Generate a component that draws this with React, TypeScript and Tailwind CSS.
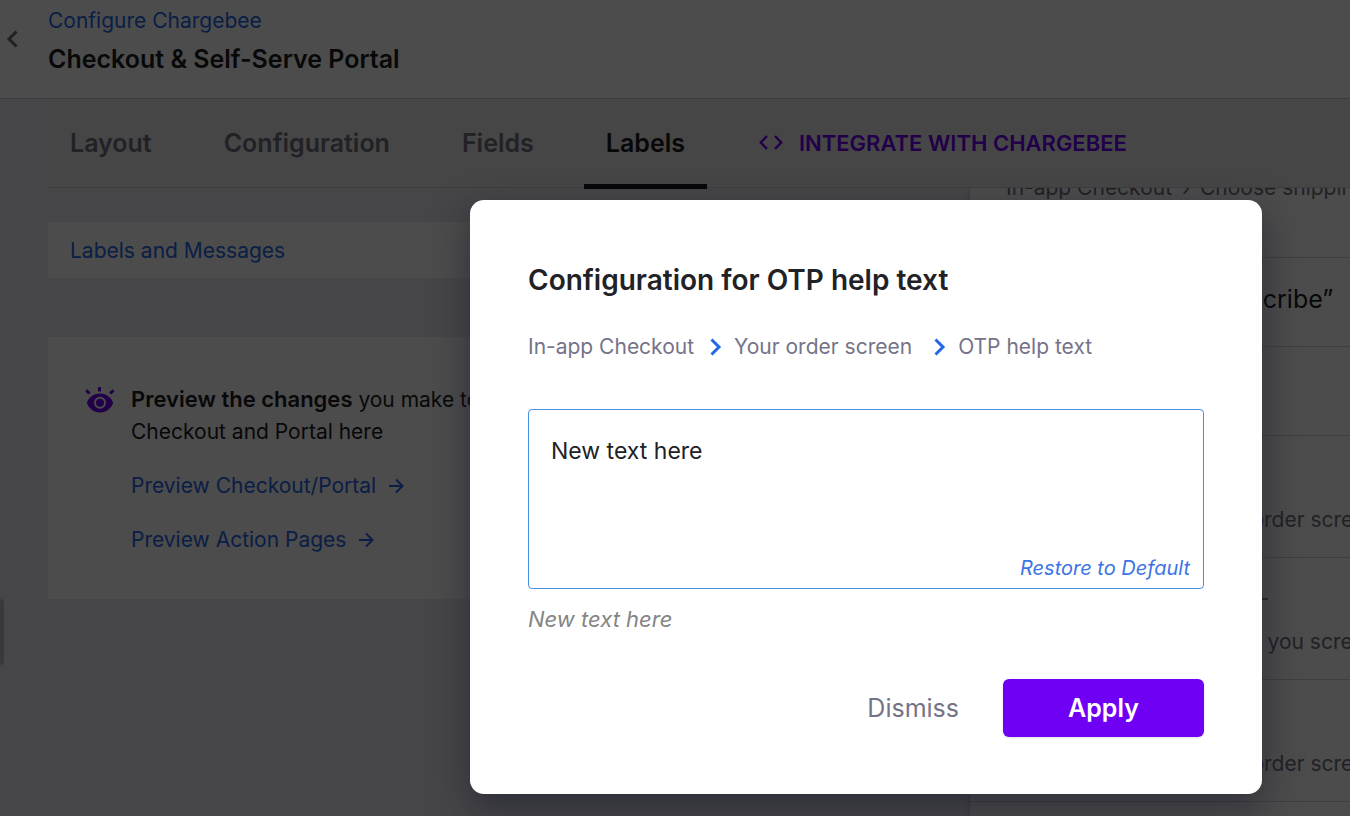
import { ReactNode } from "react";

const tabs = ["Layout", "Configuration", "Fields", "Labels"];

type Row = { title: string; screen?: string; blank?: boolean };

const rows: Row[] = [
  { title: "Button label for “Subscribe”" },
  { title: "Coupon label" },
  { title: "OTP help text", screen: "Your order screen" },
  { title: "Thank you message", screen: "Thank you screen", blank: true },
  { title: "Order summary", screen: "Your order screen" },
];

function Chevron({ left = false, className = "" }: { left?: boolean; className?: string }) {
  return (
    <svg viewBox="0 0 12 18" className={className} fill="none" stroke="currentColor" strokeWidth="3" aria-hidden="true">
      <path d={left ? "M10.5 1.5 3 9l7.5 7.5" : "M1.5 1.5 9 9l-7.5 7.5"} />
    </svg>
  );
}

function CodeIcon() {
  return (
    <svg viewBox="0 0 24 16" className="h-4 w-6" fill="none" stroke="currentColor" strokeWidth="2.4" aria-hidden="true">
      <path d="M8 1 1.800 7.500 8 14M16 1l6.200 6.500L16 14" />
    </svg>
  );
}

function EyeIcon() {
  return (
    <svg viewBox="0 0 30 26" className="h-[26px] w-[30px] shrink-0" aria-hidden="true">
      <path
        fill="currentColor"
        fillRule="evenodd"
        d="M15 6.500C8.500 6.500 3.800 10.500 1.800 15.800c2 5.700 7 9.700 13.200 9.700s11.200-4 13.200-9.700C26.200 10.500 21.500 6.500 15 6.500Zm0 3.300a6 6 0 1 1 0 12 6 6 0 0 1 0-12Z"
      />
      <circle cx="15" cy="15.800" r="4" fill="currentColor" />
      <path d="M14.500 0v4.500M1.200 3.200l3.300 3.300M28.500 3.200 25.200 6.500" stroke="currentColor" strokeWidth="3" />
    </svg>
  );
}

function ArrowIcon() {
  return (
    <svg viewBox="0 0 16 16" className="h-4 w-4" fill="none" stroke="currentColor" strokeWidth="2" aria-hidden="true">
      <path d="M1 8h13M8 1.500 14.500 8 8 14.500" />
    </svg>
  );
}

function ArrowLink({ children }: { children: ReactNode }) {
  return (
    <a href="#preview" className="flex items-center gap-3 text-[#2566e8]">
      {children}
      <ArrowIcon />
    </a>
  );
}

function Location({ screen }: { screen: string }) {
  return (
    <span className="text-[#6f6f80]">
      In-app Checkout <span className="mx-1">›</span> {screen}
    </span>
  );
}

function LabelRow({ title, screen, blank }: Row) {
  return (
    <li className={`flex shrink-0 flex-col justify-center gap-3.5 border-b border-[#d4d4dc] px-9 whitespace-nowrap ${screen ? "h-[122px]" : "h-[89px] pb-1.5"}`}>
      <span className="text-[25px] text-[#1c1c1e]">
        {title}
        {blank && <span className="ml-2 inline-block h-0.5 w-4 bg-[#90909a] align-[5px]" />}
      </span>
      {screen && <Location screen={screen} />}
    </li>
  );
}

export default function App() {
  return (
    <div className="relative flex h-screen flex-col overflow-hidden bg-[#e9e9f0] font-['Inter',sans-serif] text-[21px] leading-8 text-[#1c1c1e]">
      <header className="flex h-[99px] shrink-0 border-b border-[#c8c8d0] bg-white">
        <a href="#back" aria-label="Back" className="flex w-12 shrink-0 pt-[30px] pl-1.5 text-[#6b6b76]">
          <Chevron left className="h-[18px] w-3" />
        </a>
        <div className="flex flex-col gap-1.5 pt-[5px]">
          <a href="#configure" className="text-[#2566e8]">Configure Chargebee</a>
          <h1 className="text-[25px] font-semibold">Checkout &amp; Self-Serve Portal</h1>
        </div>
      </header>

      <div className="flex min-h-0 flex-1">
        <div className="w-12 shrink-0 pt-[500px]">
          <div className="h-[66px] w-1 rounded-r bg-[#c0c0c2]" />
        </div>
        <div className="flex min-w-0 flex-1 flex-col">
          <nav className="flex h-[89px] shrink-0 items-center gap-7 border-b border-[#cfcfd6] bg-[#ebebeb]">
            {tabs.map((tab) => (
              <a
                key={tab}
                href={`#${tab.toLowerCase()}`}
                className={`relative flex h-full items-center px-[22px] text-[25px] font-semibold ${
                  tab === "Labels"
                    ? "text-[#1c1c1e] after:absolute after:inset-x-0 after:-bottom-0.5 after:h-[5px] after:bg-[#1c1c1e]"
                    : "text-[#6f6f80]"
                }`}
              >
                {tab}
              </a>
            ))}
            <a href="#integrate" className="flex items-center gap-4 pl-6 text-[22px] font-semibold whitespace-nowrap text-[#7000f4]">
              <CodeIcon />
              INTEGRATE WITH CHARGEBEE
            </a>
          </nav>

          <main className="flex min-h-0 flex-1">
            <div className="mr-[57px] flex w-[864px] shrink-0 flex-col pt-[34px]">
              <a href="#messages" className="bg-white px-[22px] pt-[13px] pb-[11px] text-[#2566e8]">Labels and Messages</a>
              <section className="mt-[59px] flex gap-4 bg-white px-[37px] pt-[46px] pb-[43px]">
                <div className="pt-1 text-[#7000f4]">
                  <EyeIcon />
                </div>
                <div className="flex flex-col gap-[22px]">
                  <p>
                    <strong className="text-[22px] font-semibold">Preview the changes</strong> you make to
                    <br />
                    Checkout and Portal here
                  </p>
                  <ArrowLink>Preview Checkout/Portal</ArrowLink>
                  <ArrowLink>Preview Action Pages</ArrowLink>
                </div>
              </section>
            </div>
            <ul className="flex min-w-0 flex-1 flex-col overflow-hidden border-l border-[#d4d4dc] bg-white shadow-md">
              <li className="flex h-[70px] shrink-0 border-b border-[#d4d4dc] px-9 whitespace-nowrap">
                <div className="-mt-4">
                  <Location screen="Choose shipping" />
                </div>
              </li>
              {rows.map((row) => (
                <LabelRow key={row.title} {...row} />
              ))}
            </ul>
          </main>
        </div>
      </div>

      <div className="absolute inset-0 flex items-start justify-end bg-black/70 pt-[200px] pr-[88px]">
        <div
          role="dialog"
          aria-labelledby="dialog-title"
          className="flex w-[792px] flex-col rounded-[14px] bg-white px-[58px] pt-16 pb-[57px] shadow-[0_14px_36px_rgba(20,20,40,0.5)]"
        >
          <h2 id="dialog-title" className="text-[28px] font-semibold text-[#222226]">Configuration for OTP help text</h2>
          <nav aria-label="Label location" className="flex items-center gap-3 pt-[35px] text-[#757388]">
            <span>In-app Checkout</span>
            <Chevron className="ml-1 h-[18px] w-3 text-[#2566e8]" />
            <span>Your order screen</span>
            <Chevron className="ml-2.5 h-[18px] w-3 text-[#2566e8]" />
            <span>OTP help text</span>
          </nav>
          <div className="relative mt-[46px] flex">
            <textarea
              aria-labelledby="dialog-title"
              defaultValue="New text here"
              className="h-[180px] w-full resize-none rounded border border-[#4a90e2] px-[22px] py-[25px] text-[23px] leading-8 text-[#222226] outline-none"
            />
            <button type="button" className="absolute right-3.5 bottom-[5px] text-xl leading-8 text-[#3c73e6] italic">Restore to Default</button>
          </div>
          <p className="pt-3.5 text-[22px] text-[#858585] italic">New text here</p>
          <div className="flex items-center justify-end gap-11 pt-11 text-[25px]">
            <button type="button" className="text-[#757388]">Dismiss</button>
            <button type="button" className="h-[58px] w-[201px] rounded-md bg-[#7000f4] font-semibold text-white shadow-sm">Apply</button>
          </div>
        </div>
      </div>
    </div>
  );
}
